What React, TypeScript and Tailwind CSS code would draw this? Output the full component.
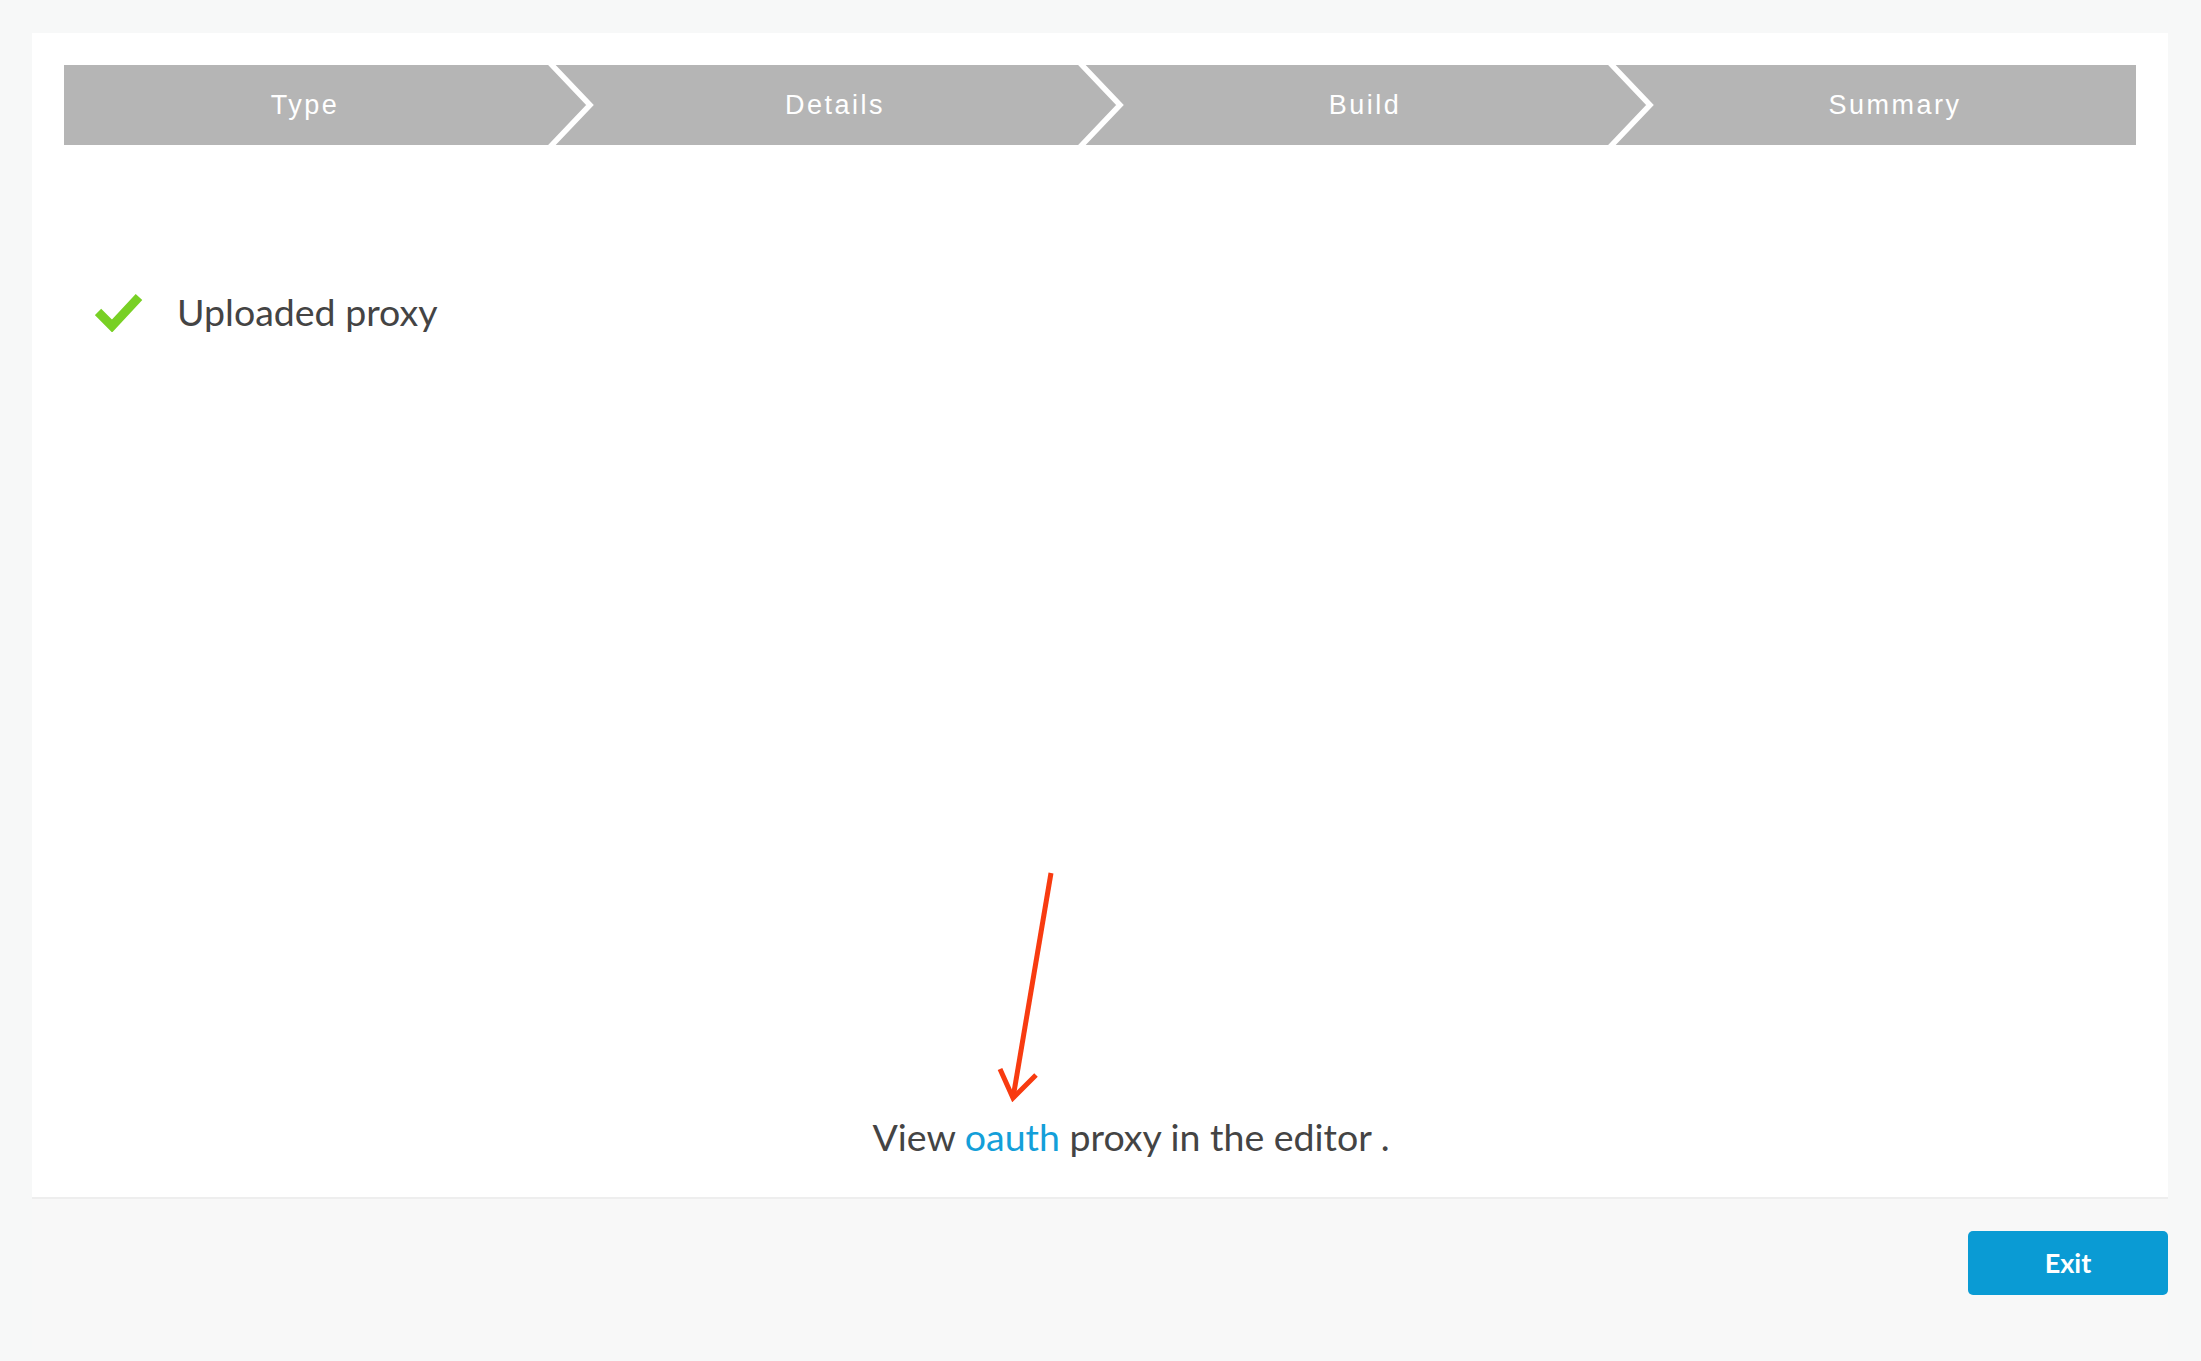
import { Fragment } from "react";

const steps = ["Type", "Details", "Build", "Summary"];

function Chevron() {
  return (
    <svg width="48" height="80" viewBox="0 0 48 80" className="shrink-0 block">
      <polyline points="4,-2 44,40 4,82" fill="none" stroke="#ffffff" strokeWidth="5.5" />
    </svg>
  );
}

function Check() {
  return (
    <svg width="48" height="40" viewBox="0 0 48 40" className="shrink-0">
      <polyline points="3,20 17,34 44,5" fill="none" stroke="#78d024" strokeWidth="9" strokeLinejoin="miter" />
    </svg>
  );
}

export default function App() {
  return (
    <div className="min-h-screen bg-[#f7f8f8] pt-[33px] pl-[32px] pr-[33px] font-['Lato',sans-serif]">
      {/* Wizard card */}
      <div className="relative h-[1166px] bg-white border-b-2 border-[#eeeeee] px-[32px] pt-[32px] flex flex-col">
        {/* Steps */}
        <div className="flex h-[80px] bg-[#b5b5b5]">
          {steps.map((s, i) => (
            <Fragment key={s}>
              {i > 0 && <Chevron />}
              <div className="flex-1 basis-0 flex items-center justify-center text-white text-[27px] tracking-[2.5px] font-['Liberation_Sans',Arial,sans-serif]">
                {s}
              </div>
            </Fragment>
          ))}
        </div>

        {/* Status */}
        <div className="mt-[143px] ml-[31px] h-[48px] flex items-center gap-[34px]">
          <Check />
          <span className="text-[37.5px] text-[#444444]">Uploaded proxy</span>
        </div>

        <div className="flex-1" />

        <div className="pb-[39px] pl-[62px] text-center text-[37.5px] leading-[42px] text-[#444444]">
          View <a className="text-[#149fd9]">oauth</a> proxy in the editor .
        </div>

        {/* annotation arrow */}
        <svg
          width="60"
          height="232"
          viewBox="0 0 60 232"
          className="absolute left-[963px] top-[837px]"
        >
          <line x1="56" y1="3" x2="18" y2="228" stroke="#f83b10" strokeWidth="5" />
          <polyline points="5,199 18,228 41,205" fill="none" stroke="#f83b10" strokeWidth="5" />
        </svg>
      </div>

      {/* Footer */}
      <div className="h-[151px] bg-[#f8f8f8] flex justify-end items-start pt-[32px]">
        <button className="w-[200px] h-[64px] rounded-[5px] bg-[#0a9bd4] text-white text-[27px] font-bold">
          Exit
        </button>
      </div>
    </div>
  );
}
